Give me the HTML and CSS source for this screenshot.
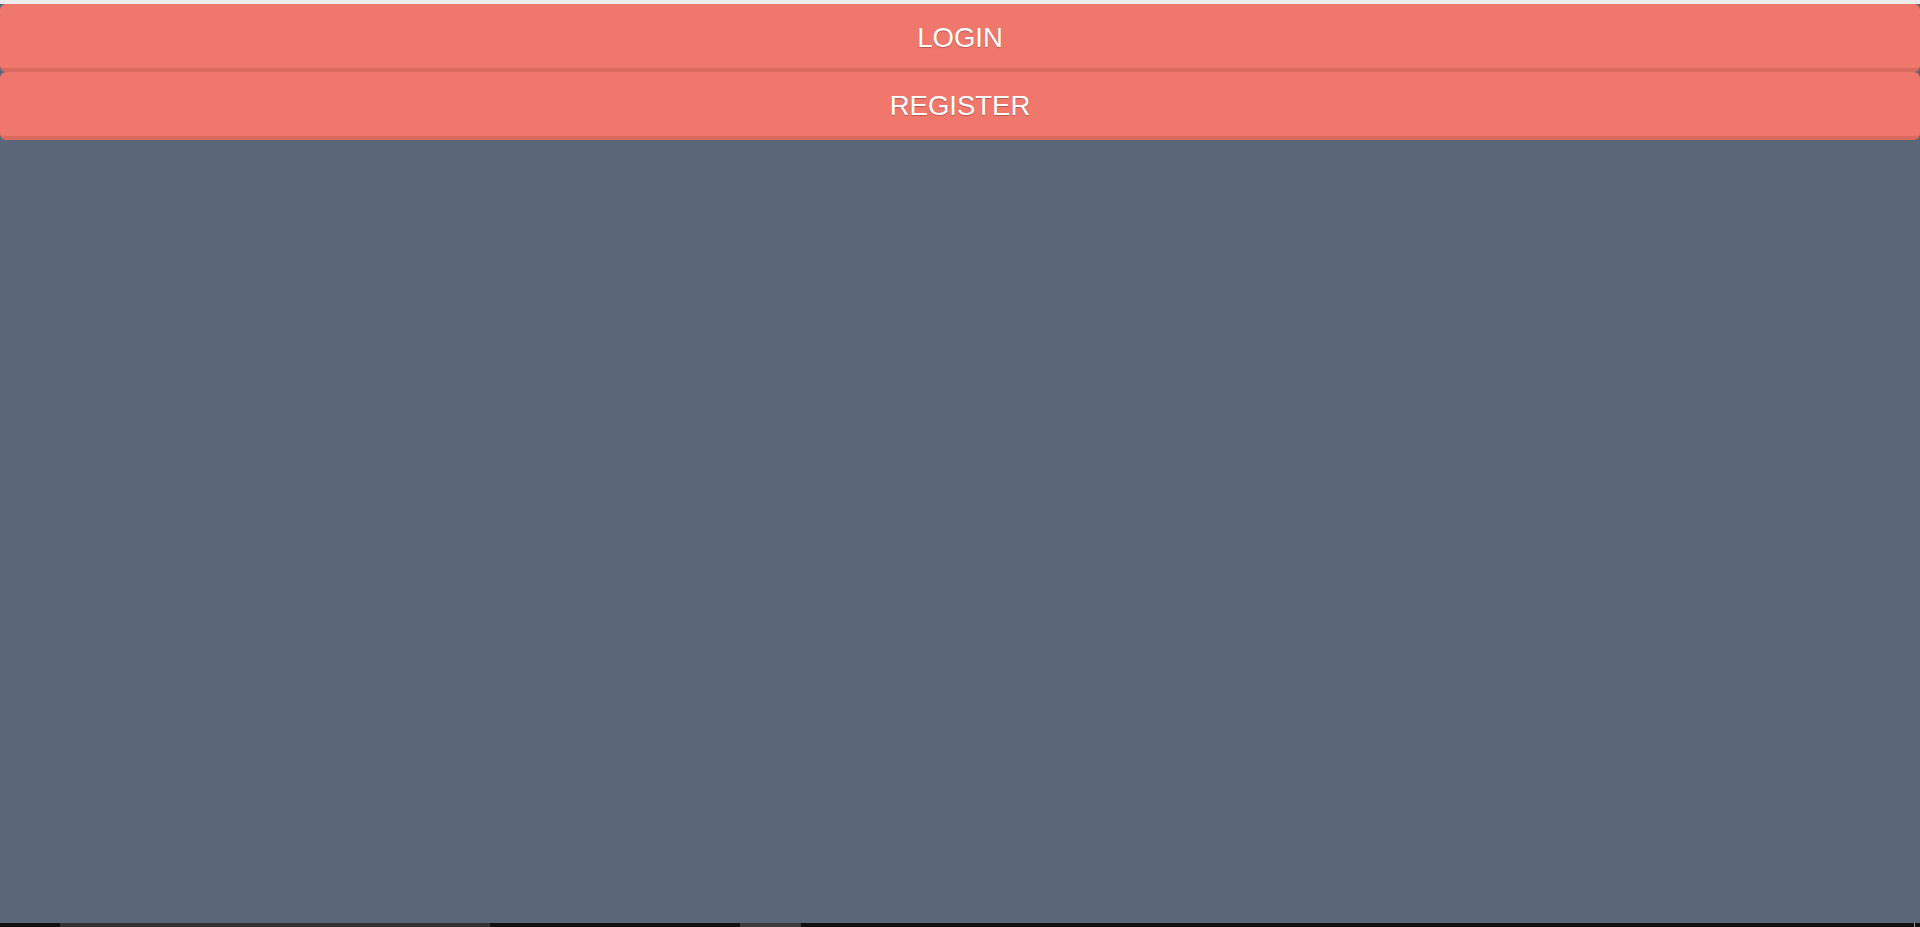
FILE: index.html
```html
<!DOCTYPE html>
<html>
<head>
<meta charset="utf-8">
<title>Login</title>
<link rel="stylesheet" href="styles.css">
</head>
<body>
<div class="page">
  <div class="top-strip"></div>
  <nav class="actions">
    <button class="btn">LOGIN</button>
    <button class="btn">REGISTER</button>
  </nav>
  <main class="content"></main>
  <div class="bottom-bar">
    <span class="seg seg-a"></span>
    <span class="seg seg-b"></span>
    <span class="tick"></span>
  </div>
</div>
</body>
</html>
```
FILE: styles.css
```css
html, body {
  margin: 0;
  padding: 0;
  height: 100%;
}
body {
  background: #5b6779;
  font-family: "Liberation Sans", Arial, sans-serif;
  overflow: hidden;
}
.page {
  display: flex;
  flex-direction: column;
  height: 100vh;
}
.top-strip {
  height: 4px;
  background: #ececec;
  flex: none;
}
.actions {
  display: flex;
  flex-direction: column;
  flex: none;
}
.btn {
  display: block;
  width: 100%;
  height: 68px;
  margin: 0;
  padding: 3px 0 0 0;
  border: none;
  border-bottom: 4px solid #d96b61;
  border-radius: 6px;
  background: #f0776c;
  color: #ffffff;
  font-family: "Liberation Sans", Arial, sans-serif;
  font-size: 27.5px;
  line-height: 1;
  text-shadow: 0 1px 1px rgba(0, 0, 0, 0.25);
  cursor: pointer;
  box-sizing: border-box;
}
.content {
  flex: 1;
}
.bottom-bar {
  height: 4px;
  flex: none;
  background: #111111;
  display: flex;
  align-items: stretch;
}
.seg {
  display: block;
}
.seg-a {
  margin-left: 60px;
  width: 430px;
  background: #333333;
}
.seg-b {
  margin-left: 250px;
  width: 61px;
  background: #3c3c3c;
}
.tick {
  margin-left: auto;
  margin-right: 5px;
  width: 1px;
  background: #9a9a9a;
}
```
